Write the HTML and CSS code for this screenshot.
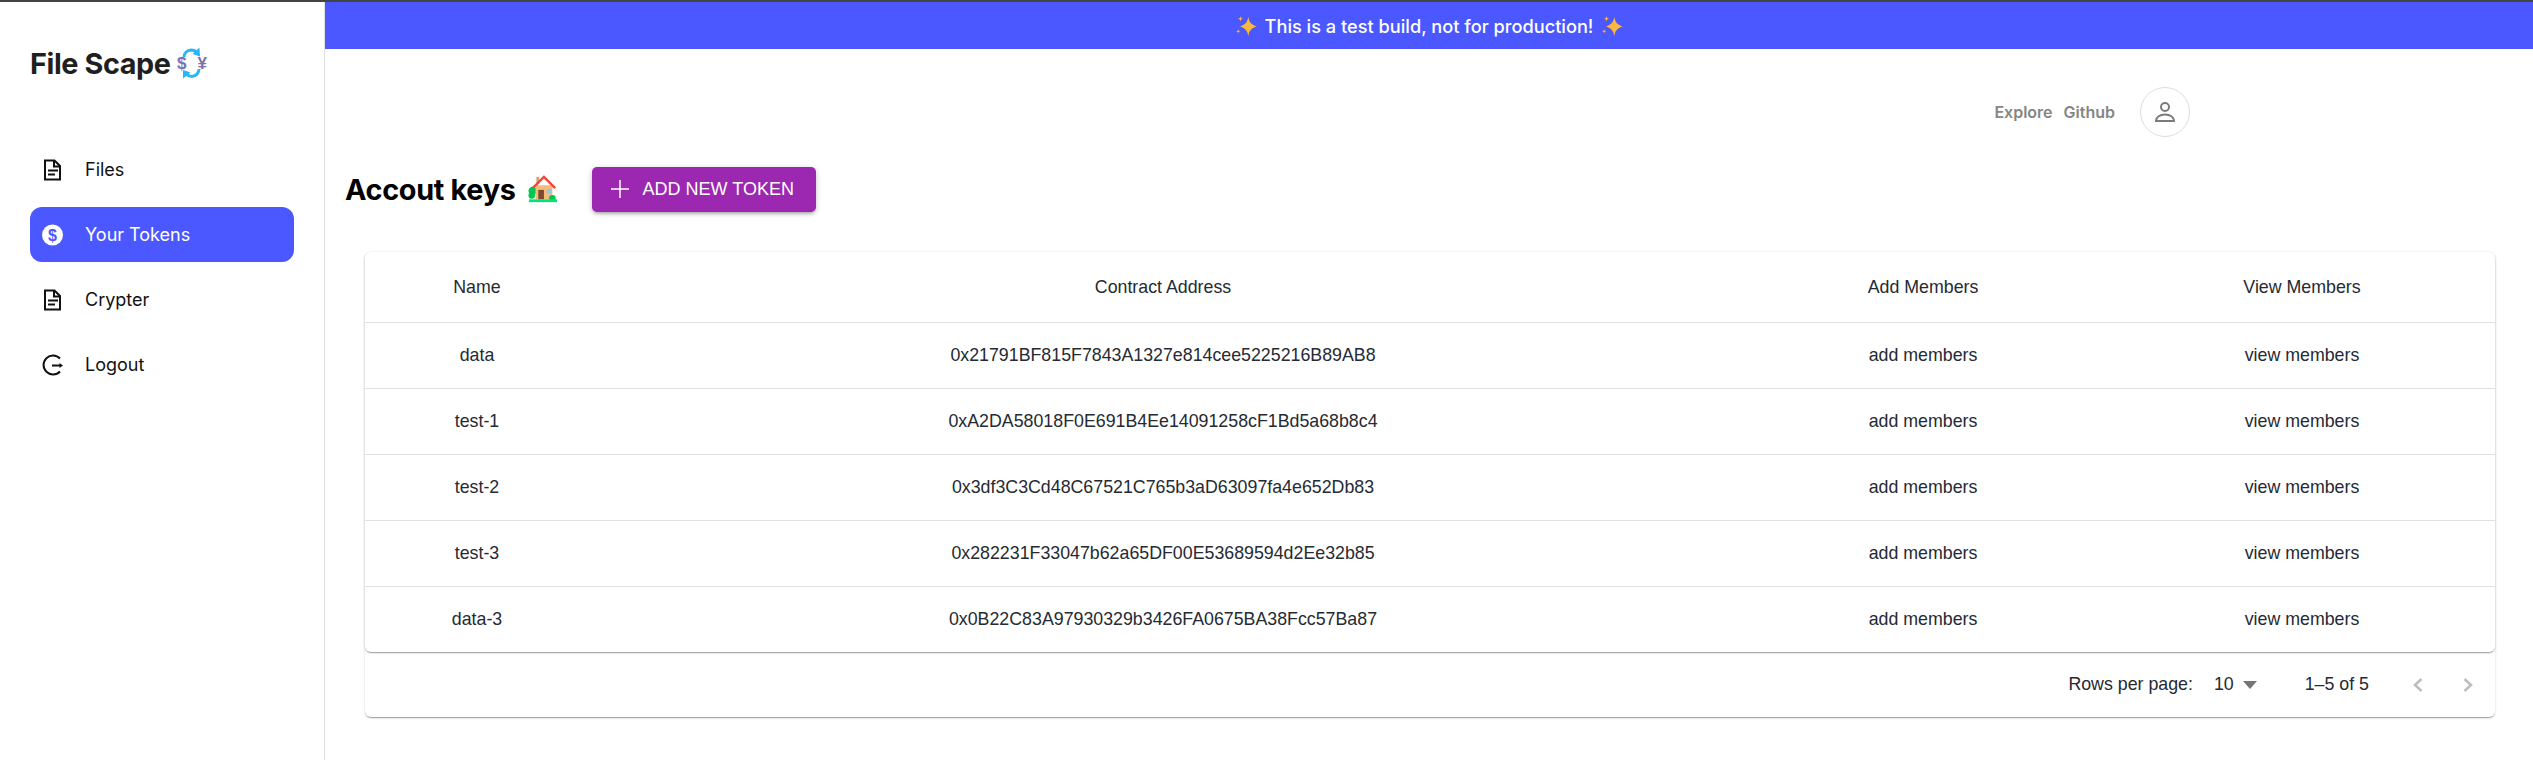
FILE: index.html
```html
<!DOCTYPE html>
<html lang="en">
<head>
<meta charset="utf-8">
<title>File Scape</title>
<link rel="stylesheet" href="styles.css">
</head>
<body>
<div class="app">
  <aside class="sidebar">
    <div class="brand">
      <span class="brand-name">File Scape</span>
      <svg class="brand-logo" viewBox="0 0 30 32" aria-hidden="true">
        <path class="logo-arc" d="M7 10A7.500 7.500 0 0 1 14 3C16 3 18 3.500 20 5"/>
        <path class="logo-head" d="M22.500 0.500L23 9.500 15.500 7z"/>
        <path class="logo-arc" d="M22 22A7.500 7.500 0 0 1 15 29.500C13 29.500 11 29 9 27"/>
        <path class="logo-head" d="M6 31.500L6 23 13.500 25.500z"/>
        <text class="logo-cur" x="0" y="22">$</text>
        <text class="logo-cur" x="20.500" y="22">¥</text>
      </svg>
    </div>
    <nav class="side-nav">
      <a class="side-item">
        <svg class="side-icon" viewBox="0 0 24 24"><path class="ico-line" d="M5 2.500h9.500l5.500 5.500v13.500h-15z"/><path class="ico-line" d="M14 2.500V8.500h6M8 12.500h10M8 16.500h7"/></svg>
        <span>Files</span>
      </a>
      <a class="side-item is-active">
        <svg class="side-icon" viewBox="0 0 24 24"><circle class="ico-white" cx="12.500" cy="12" r="10.500"/><text class="ico-dollar" x="12.500" y="17.500">$</text></svg>
        <span>Your Tokens</span>
      </a>
      <a class="side-item">
        <svg class="side-icon" viewBox="0 0 24 24"><path class="ico-line" d="M5 2.500h9.500l5.500 5.500v13.500h-15z"/><path class="ico-line" d="M14 2.500V8.500h6M8 12.500h10M8 16.500h7"/></svg>
        <span>Crypter</span>
      </a>
      <a class="side-item">
        <svg class="side-icon" viewBox="0 0 24 24"><path class="ico-line" d="M20 5.500A9.500 9.500 0 1 0 20 18.500"/><path class="ico-line" d="M12 12.500h8"/><path class="ico-fill" d="M19.500 10l3.500 2.500-3.500 2.500z"/></svg>
        <span>Logout</span>
      </a>
    </nav>
  </aside>
  <main class="main">
    <div class="banner">
      <svg class="sparkle" viewBox="0 0 24 24"><path d="M14.500 2c1 6 3 8.500 9 10.500-6 2-8 4.500-9 10.500-1-6-3-8.500-9-10.500 6-2 8-4.500 9-10.500z"/><path d="M6 1c.4 2 1 2.600 3 3-2 .4-2.600 1-3 3-.4-2-1-2.600-3-3 2-.4 2.600-1 3-3zM3.500 15.500c.3 1.500.8 2 2.300 2.300-1.500.3-2 .8-2.300 2.300-.3-1.500-.8-2-2.300-2.300 1.500-.3 2-.8 2.300-2.300z"/></svg>
      <span>This is a test build, not for production!</span>
      <svg class="sparkle" viewBox="0 0 24 24"><path d="M14.500 2c1 6 3 8.500 9 10.500-6 2-8 4.500-9 10.500-1-6-3-8.500-9-10.500 6-2 8-4.500 9-10.500z"/><path d="M6 1c.4 2 1 2.600 3 3-2 .4-2.600 1-3 3-.4-2-1-2.600-3-3 2-.4 2.600-1 3-3zM3.500 15.500c.3 1.500.8 2 2.300 2.300-1.500.3-2 .8-2.300 2.300-.3-1.500-.8-2-2.300-2.300 1.500-.3 2-.8 2.300-2.300z"/></svg>
    </div>
    <header class="topbar">
      <a class="top-link">Explore</a>
      <a class="top-link">Github</a>
      <span class="avatar">
        <svg viewBox="0 0 24 24"><circle class="ava-line" cx="12" cy="7" r="4"/><path class="ava-line" d="M3 21c0-4 4-6.500 9-6.500s9 2.500 9 6.500z"/></svg>
      </span>
    </header>
    <div class="title-row">
      <h1 class="page-title">Accout keys</h1>
      <svg class="house" viewBox="0 0 32 32" aria-hidden="true">
        <rect x="9" y="3" width="3" height="8" fill="#d99e6a"/>
        <circle cx="5" cy="18" r="4.500" fill="#00c853"/>
        <circle cx="4" cy="23" r="3.500" fill="#00c853"/>
        <rect x="8" y="12" width="18" height="15" fill="#f4bb7a"/>
        <path d="M5 15L17 3l12 12" fill="none" stroke="#f4433c" stroke-width="2.500"/>
        <rect x="11" y="17" width="6" height="10" fill="#7a4a33"/>
        <rect x="20" y="16" width="5" height="5" fill="#8ec9ee"/>
        <circle cx="26" cy="26" r="3.500" fill="#00c853"/>
        <rect x="1" y="27" width="30" height="3" fill="#00e676"/>
      </svg>
      <button class="add-btn" type="button">
        <svg class="add-plus" viewBox="0 0 18 18"><path d="M9 0v18M0 9h18"/></svg>
        <span>ADD NEW TOKEN</span>
      </button>
    </div>
    <section class="card">
      <div class="table-paper">
        <table class="tokens">
          <colgroup>
            <col class="col-name"><col class="col-addr"><col class="col-add"><col class="col-view">
          </colgroup>
          <thead>
            <tr><th>Name</th><th>Contract Address</th><th>Add Members</th><th>View Members</th></tr>
          </thead>
          <tbody>
            <tr><td>data</td><td>0x21791BF815F7843A1327e814cee5225216B89AB8</td><td>add members</td><td>view members</td></tr>
            <tr><td>test-1</td><td>0xA2DA58018F0E691B4Ee14091258cF1Bd5a68b8c4</td><td>add members</td><td>view members</td></tr>
            <tr><td>test-2</td><td>0x3df3C3Cd48C67521C765b3aD63097fa4e652Db83</td><td>add members</td><td>view members</td></tr>
            <tr><td>test-3</td><td>0x282231F33047b62a65DF00E53689594d2Ee32b85</td><td>add members</td><td>view members</td></tr>
            <tr><td>data-3</td><td>0x0B22C83A97930329b3426FA0675BA38Fcc57Ba87</td><td>add members</td><td>view members</td></tr>
          </tbody>
        </table>
      </div>
      <div class="pager">
        <span class="pager-label">Rows per page:</span>
        <span class="pager-select">10<svg class="caret" viewBox="0 0 14 8"><path d="M0 0h14L7 8z"/></svg></span>
        <span class="pager-count">1–5 of 5</span>
        <svg class="chev" viewBox="0 0 12 16"><path d="M9.500 2L3 8l6.500 6"/></svg>
        <svg class="chev" viewBox="0 0 12 16"><path d="M2.500 2L9 8l-6.500 6"/></svg>
      </div>
    </section>
  </main>
</div>
</body>
</html>
```
FILE: styles.css
```css
* { box-sizing: border-box; }
html, body { margin: 0; padding: 0; height: 100%; background: #fff; overflow: hidden; }
body { font-family: "Liberation Sans", Arial, sans-serif; color: #222; }
.app { display: flex; min-height: 760px; border-top: 2px solid #444; }

.sidebar { width: 325px; flex: none; border-right: 1px solid #e0e0e0; padding: 0 30px; }
.brand { display: flex; align-items: center; height: 122px; gap: 6px; }
.brand-name { font-family: Inter, sans-serif; font-weight: 700; font-size: 28.800px; letter-spacing: -0.4px; color: #1f1f1f; }
.brand-logo { width: 30px; height: 32px; }
.logo-arc { fill: none; stroke: #29b6f6; stroke-width: 3; }
.logo-head { fill: #29b6f6; }
.logo-cur { font-family: "Liberation Sans", sans-serif; font-weight: 700; font-size: 17px; fill: #7e6fb0; }

.side-nav { display: flex; flex-direction: column; gap: 10px; margin-top: 18px; width: 264px; }
.side-item { display: flex; align-items: center; height: 55px; padding-left: 10px; gap: 21px; border-radius: 12px; font-family: Inter, sans-serif; font-size: 18px; color: #111; }
.side-item.is-active { background: #4b57ff; color: #fff; }
.side-icon { width: 24px; height: 24px; flex: none; }
.ico-line { fill: none; stroke: #111; stroke-width: 2; }
.ico-fill { fill: #111; }
.ico-white { fill: #fff; }
.ico-dollar { fill: #4b57ff; font-family: "Liberation Sans", sans-serif; font-weight: 700; font-size: 16px; text-anchor: middle; }

.main { flex: 1; min-width: 0; }
.banner { display: flex; align-items: center; justify-content: center; gap: 8px; height: 47px; background: #4b57ff; color: #fff; font-family: Inter, sans-serif; font-size: 18.200px; font-weight: 500; }
.sparkle { width: 22px; height: 22px; fill: #fbb93c; }
.topbar { display: flex; align-items: center; justify-content: flex-end; height: 126px; padding-right: 343px; }
.top-link { font-family: Inter, sans-serif; font-size: 16px; font-weight: 600; color: #858585; margin-right: 11px; }
.top-link:last-of-type { margin-right: 25px; }
.avatar { display: flex; align-items: center; justify-content: center; width: 50px; height: 50px; border: 1px solid #ddd; border-radius: 50%; }
.avatar svg { width: 24px; height: 24px; }
.ava-line { fill: none; stroke: #7b7b7b; stroke-width: 2; }

.title-row { display: flex; align-items: center; height: 48px; margin-top: -10px; padding-left: 20px; }
.page-title { margin: 0; font-family: Inter, sans-serif; font-size: 28.800px; font-weight: 700; letter-spacing: -0.3px; color: #000; }
.house { width: 30px; height: 30px; margin-left: 12px; }
.add-btn { display: flex; align-items: center; gap: 14px; height: 45px; width: 224px; margin-left: 34px; padding: 0 0 0 19px; border: 0; border-radius: 5px; background: #9c27b0; color: #fff; font-family: "Liberation Sans", sans-serif; font-size: 18px; box-shadow: 0 3px 3px -2px rgba(0,0,0,.2), 0 2px 4px rgba(0,0,0,.14), 0 1px 7px rgba(0,0,0,.12); }
.add-plus { width: 18px; height: 18px; fill: none; stroke: #fff; stroke-width: 1.500; }

.card { margin: 39px 38px 0 40px; border-radius: 6px; background: #fff; box-shadow: 0 2px 1px -1px rgba(0,0,0,.2), 0 1px 1px rgba(0,0,0,.14), 0 1px 3px rgba(0,0,0,.12); }
.table-paper { border-radius: 6px; box-shadow: 0 2px 1px -1px rgba(0,0,0,.2), 0 1px 1px rgba(0,0,0,.14), 0 1px 3px rgba(0,0,0,.12); }
.tokens { width: 100%; border-collapse: collapse; table-layout: fixed; font-size: 17.800px; color: #252a33; }
.col-name { width: 224px; }
.col-addr { width: 1148px; }
.col-add { width: 372px; }
.col-view { width: 386px; }
.tokens th, .tokens td { padding: 0; text-align: center; font-weight: 400; }
.tokens th { height: 70px; padding-top: 2px; }
.tokens td { height: 66px; }
.tokens tr { border-bottom: 1px solid #e0e0e0; }
.tokens tbody tr:last-child { border-bottom: 0; }

.pager { display: flex; align-items: center; justify-content: flex-end; height: 65px; padding-right: 21px; font-size: 17.800px; color: #252a33; }
.pager-select { display: flex; align-items: center; margin-left: 21px; gap: 9px; }
.caret { width: 14px; height: 8px; fill: #757575; }
.pager-count { margin-left: 48px; margin-right: 43px; }
.chev { width: 12px; height: 16px; fill: none; stroke: #bdbdbd; stroke-width: 2.500; }
.chev + .chev { margin-left: 38px; }
```
